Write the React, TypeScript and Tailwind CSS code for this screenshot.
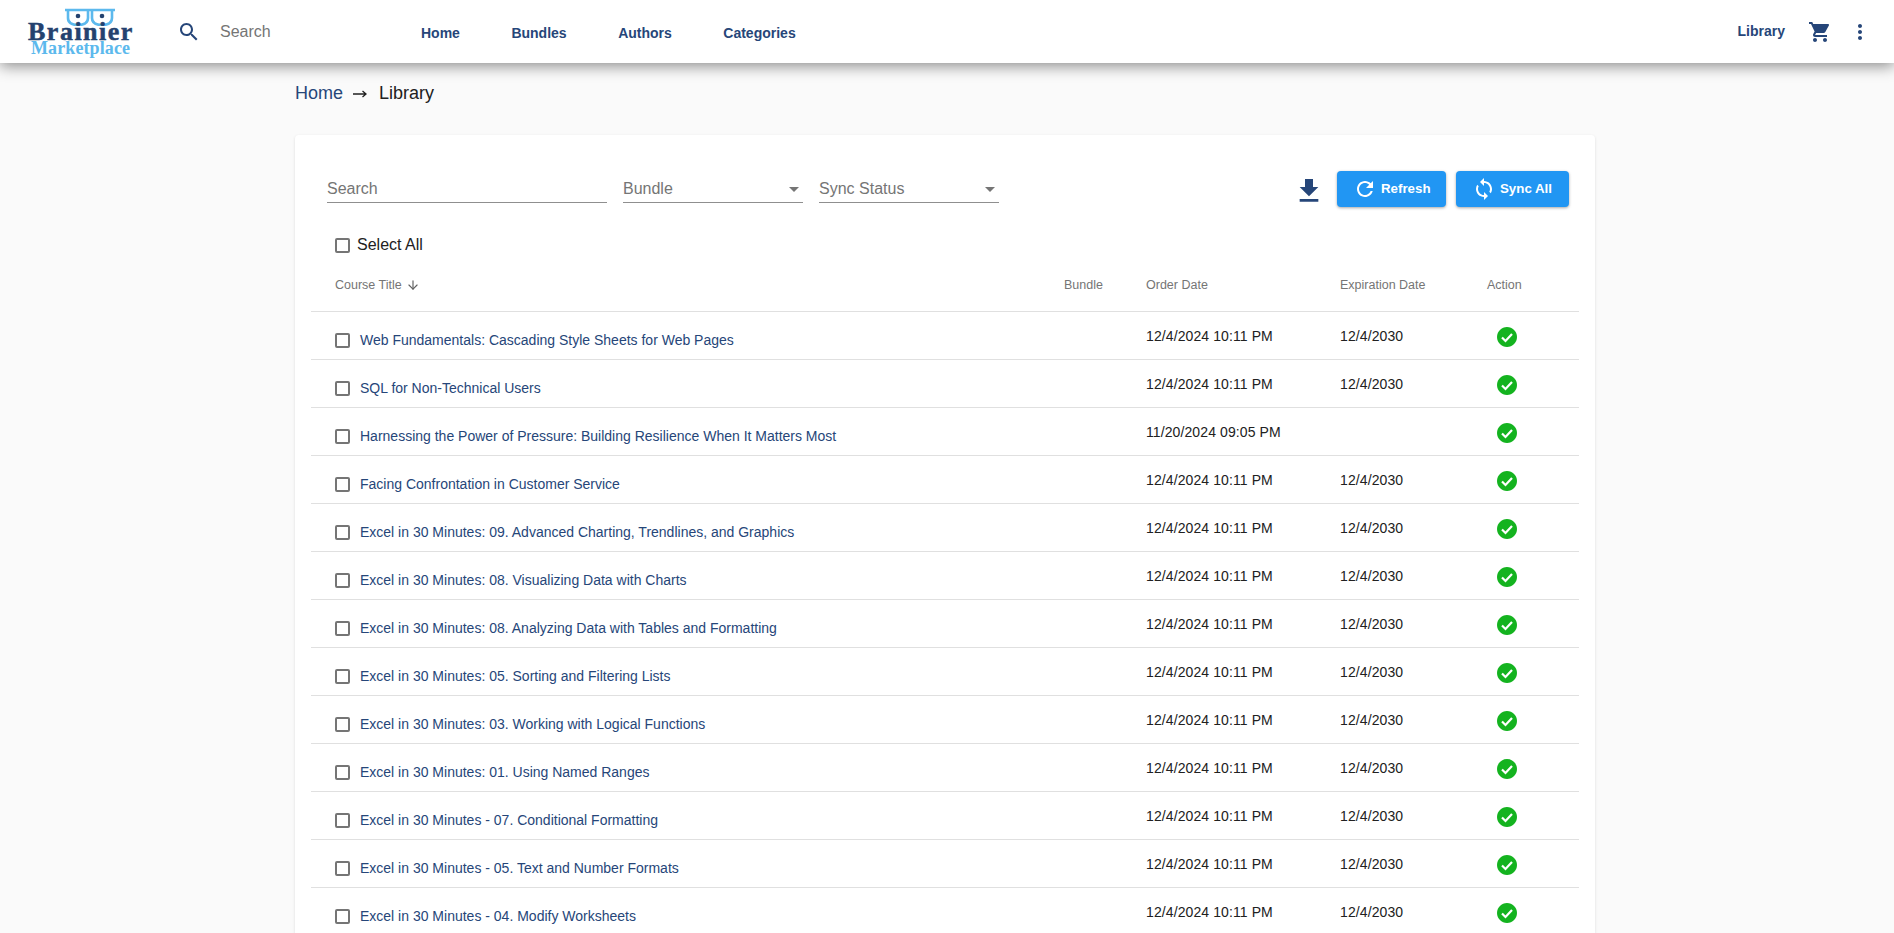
import { ArrowDown } from "lucide-react";

const courses = [
  { title: "Web Fundamentals: Cascading Style Sheets for Web Pages", order: "12/4/2024 10:11 PM", exp: "12/4/2030" },
  { title: "SQL for Non-Technical Users", order: "12/4/2024 10:11 PM", exp: "12/4/2030" },
  { title: "Harnessing the Power of Pressure: Building Resilience When It Matters Most", order: "11/20/2024 09:05 PM", exp: "" },
  { title: "Facing Confrontation in Customer Service", order: "12/4/2024 10:11 PM", exp: "12/4/2030" },
  { title: "Excel in 30 Minutes: 09. Advanced Charting, Trendlines, and Graphics", order: "12/4/2024 10:11 PM", exp: "12/4/2030" },
  { title: "Excel in 30 Minutes: 08. Visualizing Data with Charts", order: "12/4/2024 10:11 PM", exp: "12/4/2030" },
  { title: "Excel in 30 Minutes: 08. Analyzing Data with Tables and Formatting", order: "12/4/2024 10:11 PM", exp: "12/4/2030" },
  { title: "Excel in 30 Minutes: 05. Sorting and Filtering Lists", order: "12/4/2024 10:11 PM", exp: "12/4/2030" },
  { title: "Excel in 30 Minutes: 03. Working with Logical Functions", order: "12/4/2024 10:11 PM", exp: "12/4/2030" },
  { title: "Excel in 30 Minutes: 01. Using Named Ranges", order: "12/4/2024 10:11 PM", exp: "12/4/2030" },
  { title: "Excel in 30 Minutes - 07. Conditional Formatting", order: "12/4/2024 10:11 PM", exp: "12/4/2030" },
  { title: "Excel in 30 Minutes - 05. Text and Number Formats", order: "12/4/2024 10:11 PM", exp: "12/4/2030" },
  { title: "Excel in 30 Minutes - 04. Modify Worksheets", order: "12/4/2024 10:11 PM", exp: "12/4/2030" },
];

function Logo() {
  return (
    <div className="relative h-[63px] w-[110px] shrink-0 font-['Liberation_Serif',serif] font-bold">
      <svg viewBox="0 0 50 18" className="absolute left-[37px] top-[8px] h-[18px] w-[50px]" fill="none">
        <path d="M0 2h50M3 2h20v8q0 7-10 7T3 10zM27 2h20v8q0 7-10 7T27 10z" stroke="#5cb9ed" strokeWidth="2.6" />
        <circle cx="13" cy="8" r="2.3" fill="#24426f" />
        <circle cx="37" cy="8" r="2.3" fill="#24426f" />
      </svg>
      <span className="absolute left-0 top-[22px] text-[26px] leading-[20px] tracking-[1.5px] text-[#24426f] [-webkit-text-stroke:0.5px_#24426f]">Brainier</span>
      <span className="absolute left-[3px] top-[41px] text-[18px] leading-[14px] tracking-[0.1px] text-[#5cb9ed]">Marketplace</span>
    </div>
  );
}

function Checkbox() {
  return <span className="block h-[15px] w-[15px] shrink-0 rounded-[2px] border-2 border-[#757575]" />;
}

function Field({ label, width, select }: { label: string; width: string; select?: boolean }) {
  return (
    <div className={`flex h-[32px] items-center justify-between border-b border-[#8f8f8f] pt-[5px] text-[16px] text-[#757575] ${width}`}>
      <span>{label}</span>
      {select && <span className="mr-[4px] h-0 w-0 border-x-[5px] border-t-[5px] border-x-transparent border-t-[#757575]" />}
    </div>
  );
}

export default function App() {
  return (
    <div className="h-screen overflow-hidden bg-[#fafafa] font-['Liberation_Sans',sans-serif]">
      <header className="relative z-10 flex h-[63px] items-center bg-white pl-[28px] text-[#264679] shadow-[0_3px_14px_rgba(0,0,0,0.45)]">
        <Logo />
        <svg viewBox="0 0 24 24" className="ml-[39px] h-[24px] w-[24px] fill-[#264679]">
          <path d="M15.5 14h-.79l-.28-.27C15.41 12.59 16 11.11 16 9.5 16 5.91 13.09 3 9.5 3S3 5.91 3 9.5 5.91 16 9.5 16c1.61 0 3.09-.59 4.23-1.57l.27.28v.79l5 4.99L20.49 19l-4.99-5zm-6 0C7.01 14 5 11.99 5 9.5S7.01 5 9.5 5 14 7.01 14 9.5 11.99 14 9.5 14z" />
        </svg>
        <span className="ml-[19px] w-[201px] text-[16px] text-[#757575]">Search</span>
        <nav className="flex items-center gap-[51.5px] pt-[3px] text-[14px] font-bold">
          <span>Home</span>
          <span>Bundles</span>
          <span>Authors</span>
          <span>Categories</span>
        </nav>
        <div className="ml-auto flex items-center pr-[22px]">
          <span className="text-[14px] font-bold">Library</span>
          <svg viewBox="0 0 24 24" className="ml-[23px] h-[24px] w-[24px] fill-[#264679]">
            <path d="M7 18c-1.1 0-1.99.9-1.99 2S5.9 22 7 22s2-.9 2-2-.9-2-2-2zM1 2v2h2l3.6 7.59-1.35 2.45c-.16.28-.25.61-.25.96 0 1.1.9 2 2 2h12v-2H7.42c-.14 0-.25-.11-.25-.25l.03-.12.9-1.63h7.45c.75 0 1.41-.41 1.75-1.03l3.58-6.49c.08-.14.12-.31.12-.48 0-.55-.45-1-1-1H5.21l-.94-2H1zm16 16c-1.1 0-1.99.9-1.99 2s.89 2 1.99 2 2-.9 2-2-.9-2-2-2z" />
          </svg>
          <svg viewBox="0 0 24 24" className="ml-[16px] h-[24px] w-[24px] fill-[#264679]">
            <path d="M12 8c1.1 0 2-.9 2-2s-.9-2-2-2-2 .9-2 2 .9 2 2 2zm0 2c-1.1 0-2 .9-2 2s.9 2 2 2 2-.9 2-2-.9-2-2-2zm0 6c-1.1 0-2 .9-2 2s.9 2 2 2 2-.9 2-2-.9-2-2-2z" />
          </svg>
        </div>
      </header>

      <main className="ml-[295px] w-[1300px]">
        <div className="flex h-[72px] items-center pb-[11px] text-[18px]">
          <span className="text-[#264679]">Home</span>
          <svg viewBox="0 0 14 8" className="mr-[12px] ml-[10px] h-[8px] w-[14px]" fill="none" stroke="#212121" strokeWidth="1.3">
            <path d="M0 4h13M9.5 1l3.5 3-3.5 3" />
          </svg>
          <span className="text-[#212121]">Library</span>
        </div>

        <section className="rounded-[4px] bg-white pt-[36px] pr-[16px] pl-[16px] shadow-[0_1px_3px_rgba(0,0,0,0.12)]">
          <div className="flex items-start pr-[10px] pl-[16px]">
            <div className="flex gap-[16px]">
              <Field label="Search" width="w-[280px]" />
              <Field label="Bundle" width="w-[180px]" select />
              <Field label="Sync Status" width="w-[180px]" select />
            </div>
            <svg viewBox="0 0 24 24" className="mt-[4px] ml-auto h-[32px] w-[32px] fill-[#264679]">
              <path d="M19 9h-4V3H9v6H5l7 7 7-7zM5 18v2h14v-2H5z" />
            </svg>
            <button className="ml-[12px] flex h-[36px] w-[109px] items-center justify-start gap-[4px] rounded-[4px] bg-[#2196f3] pl-[16px] text-[13.3px] font-bold text-white shadow-[0_1px_3px_rgba(0,0,0,0.35)]">
              <svg viewBox="0 0 24 24" className="h-[24px] w-[24px] fill-white">
                <path d="M17.65 6.35C16.2 4.9 14.21 4 12 4c-4.42 0-7.99 3.58-7.99 8s3.57 8 7.99 8c3.73 0 6.84-2.55 7.73-6h-2.08c-.82 2.33-3.04 4-5.65 4-3.31 0-6-2.69-6-6s2.69-6 6-6c1.66 0 3.14.69 4.22 1.78L13 11h7V4l-2.35 2.35z" />
              </svg>
              Refresh
            </button>
            <button className="ml-[10px] flex h-[36px] w-[113px] items-center justify-start gap-[4px] rounded-[4px] bg-[#2196f3] pl-[16px] text-[13.3px] font-bold text-white shadow-[0_1px_3px_rgba(0,0,0,0.35)]">
              <svg viewBox="0 0 24 24" className="h-[24px] w-[24px] fill-white">
                <path d="M12 4V1L8 5l4 4V6c3.31 0 6 2.69 6 6 0 1.01-.25 1.97-.7 2.8l1.46 1.46C19.54 15.03 20 13.57 20 12c0-4.42-3.58-8-8-8zm0 14c-3.31 0-6-2.69-6-6 0-1.01.25-1.97.7-2.8L5.24 7.74C4.46 8.97 4 10.43 4 12c0 4.42 3.58 8 8 8v3l4-4-4-4v3z" />
              </svg>
              Sync All
            </button>
          </div>

          <div className="mt-[24px] flex h-[28px] items-center gap-[7px] pl-[24px] text-[16px] text-[#212121]">
            <Checkbox />
            <span>Select All</span>
          </div>

          <div className="grid h-[53px] grid-cols-[753px_82px_194px_147px_92px] items-center border-b border-[#e0e0e0] text-[12.5px] text-[#757575]">
            <span className="flex items-center gap-[4px] pl-[24px]">
              Course Title
              <ArrowDown className="h-[14px] w-[14px] text-[#616161]" strokeWidth={2} />
            </span>
            <span>Bundle</span>
            <span>Order Date</span>
            <span>Expiration Date</span>
            <span>Action</span>
          </div>

          {courses.map((c) => (
            <div key={c.title} className="grid h-[48px] grid-cols-[753px_82px_194px_147px_92px] items-center border-b border-[#e0e0e0] text-[14px] text-[#212121]">
              <div className="flex items-center gap-[10px] pt-[9px] pl-[24px] text-[#264679]">
                <Checkbox />
                <span>{c.title}</span>
              </div>
              <span />
              <span className="pt-[2px] tracking-[0.1px]">{c.order}</span>
              <span className="pt-[2px] tracking-[0.1px]">{c.exp}</span>
              <svg viewBox="0 0 24 24" className="mt-[2px] ml-[8px] h-[24px] w-[24px] fill-[#14b31f]">
                <path d="M12 2C6.48 2 2 6.48 2 12s4.48 10 10 10 10-4.48 10-10S17.52 2 12 2z" />
                <path d="M7 12.5l3.5 3.5 6.5-7" fill="none" stroke="#fff" strokeWidth="2.2" />
              </svg>
            </div>
          ))}
        </section>
      </main>
    </div>
  );
}
